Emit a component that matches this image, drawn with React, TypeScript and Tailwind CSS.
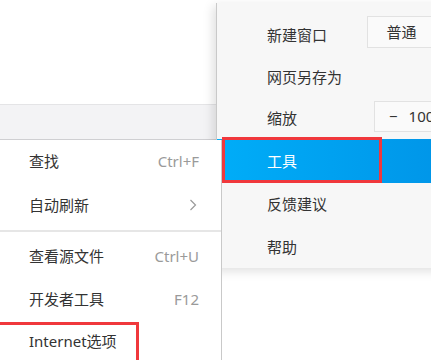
import React from 'react';

const font = {
  fontFamily: '"Noto Sans", "Noto Sans CJK SC", sans-serif',
};

function MainItem({
  label,
  h,
  active,
  children,
}: {
  label: string;
  h: string;
  active?: boolean;
  children?: React.ReactNode;
}) {
  return (
    <div
      className={`relative flex items-center pl-[50px] text-[15px] ${h} ${
        active
          ? 'bg-gradient-to-r from-[#00adf8] to-[#0095e8] text-white'
          : 'text-[#333]'
      }`}
    >
      <span className="w-[100px] shrink-0">{label}</span>
      {children}
    </div>
  );
}

function SubItem({
  label,
  hint,
  h,
}: {
  label: string;
  hint?: React.ReactNode;
  h: string;
}) {
  return (
    <div
      className={`flex items-center justify-between pl-[29px] pr-[22px] text-[15px] text-[#333] ${h}`}
    >
      <span>{label}</span>
      {hint}
    </div>
  );
}

export default function App() {
  return (
    <div
      className="relative h-[360px] w-[431px] overflow-hidden bg-white"
      style={font}
    >
      {/* page behind the menus */}
      <div className="h-[104px] bg-white" />
      <div className="h-[36px] border-t border-b border-t-[#e4e4e6] border-b-[#cfcfd2] bg-[#f3f3f5]" />

      {/* main menu */}
      <div className="absolute left-[216px] top-[3px] w-[230px] border-l border-[#c9c9c9] bg-[#f7f7f7] pt-[11px] shadow-[-3px_3px_10px_rgba(0,0,0,0.13)]">
        <MainItem label="新建窗口" h="h-[42px]">
          <div className="mb-[6px] flex h-[32px] w-[75px] shrink-0 items-center justify-center border border-[#e2e2e2] bg-[#fafafa] pr-[6px] text-[15px] text-[#333]">
            普通
          </div>
        </MainItem>
        <MainItem label="网页另存为" h="h-[42px]" />
        <MainItem label="缩放" h="h-[41px]">
          <div className="mb-[4px] ml-[7px] flex h-[31px] w-[80px] shrink-0 items-center gap-[11px] border border-[#e2e2e2] bg-[#fafafa] pl-[14px] text-[15px] text-[#333]">
            <span>−</span>
            <span>100%</span>
          </div>
        </MainItem>
        <MainItem label="工具" h="h-[44px]" active>
          <div className="absolute left-[5px] top-[-2px] h-[46px] w-[160px] border-[3px] border-[#f0383c]" />
        </MainItem>
        <MainItem label="反馈建议" h="h-[43px]" />
        <MainItem label="帮助" h="h-[42px]" />
      </div>

      {/* tools submenu */}
      <div className="absolute left-0 top-[140px] h-[230px] w-[222px] border-r border-[#c9c9c9] bg-white">
        <SubItem
          label="查找"
          h="h-[43px]"
          hint={<span className="text-[#9a9a9a]">Ctrl+F</span>}
        />
        <SubItem
          label="自动刷新"
          h="h-[44px]"
          hint={
            <svg
              width="8"
              height="12"
              viewBox="0 0 8 12"
              className="mr-[2px]"
              fill="none"
              stroke="#9a9a9a"
              strokeWidth="1.2"
            >
              <path d="M1.5 1l5 5-5 5" />
            </svg>
          }
        />
        <div className="my-[3px] h-[2px] bg-[#e6e6e6]" />
        <SubItem
          label="查看源文件"
          h="h-[43px]"
          hint={<span className="text-[#9a9a9a]">Ctrl+U</span>}
        />
        <SubItem
          label="开发者工具"
          h="h-[42px]"
          hint={<span className="text-[#9a9a9a]">F12</span>}
        />
        <div className="relative">
          <SubItem label="Internet选项" h="h-[42px]" />
          <div className="absolute left-[-4px] top-[2px] h-[45px] w-[143px] border-[3px] border-[#f0383c]" />
        </div>
      </div>
    </div>
  );
}
